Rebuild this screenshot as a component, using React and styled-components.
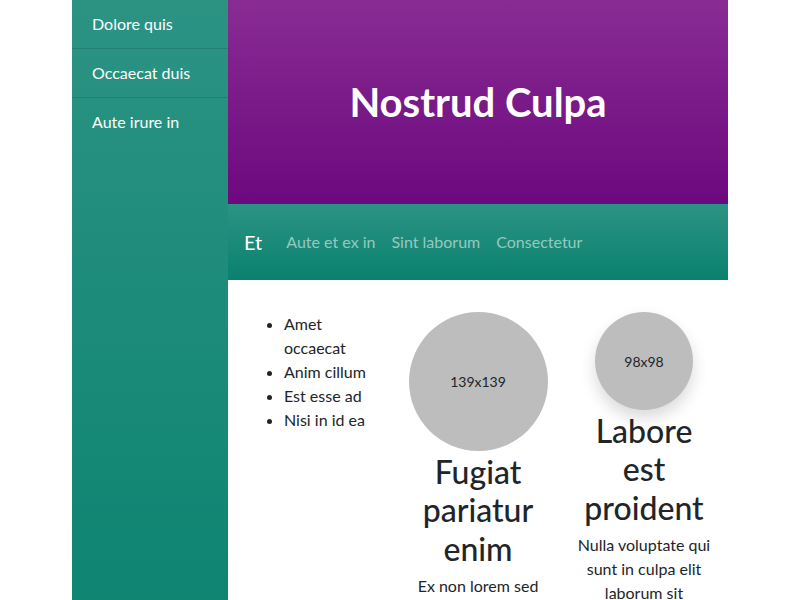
import React from "react";
import styled, { createGlobalStyle } from "styled-components";

const GlobalStyle = createGlobalStyle`
  html, body {
    margin: 0;
    padding: 0;
    background: #fff;
  }
  body {
    font-family: Lato, "Noto Sans", sans-serif;
    font-size: 16px;
    line-height: 1.5;
    color: #212529;
  }
`;

const Shell = styled.div`
  width: 656px;
  margin: 0 auto;
  min-height: 600px;
  display: grid;
  grid-template-columns: 156px 500px;
`;

const Sidebar = styled.aside`
  background: linear-gradient(180deg, #2c9383 0%, #0e8471 100%);
  min-height: 600px;
`;

const SideLink = styled.a`
  display: block;
  padding: 12px 20px;
  color: #fff;
  text-decoration: none;
  border-bottom: 1px solid ${(p) => (p.last ? "transparent" : "rgba(0,0,0,0.12)")};
`;

const Main = styled.main`
  display: flex;
  flex-direction: column;
`;

const Hero = styled.header`
  height: 204px;
  display: flex;
  align-items: center;
  justify-content: center;
  background: linear-gradient(180deg, #882c93 0%, #6d087e 100%);

  h1 {
    margin: 0;
    color: #fff;
    font-size: 40px;
    font-weight: 700;
    line-height: 1.2;
  }
`;

const Navbar = styled.nav`
  height: 76px;
  display: flex;
  align-items: center;
  padding: 0 16px;
  background: linear-gradient(180deg, #2c9383 0%, #0a816f 100%);
`;

const Brand = styled.span`
  color: #fff;
  font-size: 20px;
  margin-right: 16px;
`;

const NavItem = styled.a`
  color: rgba(255, 255, 255, 0.55);
  padding: 0 8px;
  text-decoration: none;
`;

const Content = styled.section`
  display: grid;
  grid-template-columns: 156px 156px 1fr;
  padding: 32px 16px 0;
  align-items: start;
`;

const List = styled.ul`
  margin: 0;
  padding: 0 16px 0 40px;
`;

const Card = styled.div`
  display: flex;
  flex-direction: column;
  align-items: center;
  text-align: center;
  padding-left: ${(p) => p.inset || 0}px;

  h2 {
    margin: 2px 0 6px;
    font-size: 32px;
    font-weight: 500;
    line-height: 1.2;
  }
  p {
    margin: 0;
  }
`;

const Avatar = styled.div`
  width: ${(p) => p.size}px;
  height: ${(p) => p.size}px;
  flex: none;
  border-radius: 50%;
  background: #bdbdbd;
  display: flex;
  align-items: center;
  justify-content: center;
  font-size: 14px;
  box-shadow: ${(p) => (p.raised ? "0 8px 16px rgba(0,0,0,0.15)" : "none")};
`;

export default function App() {
  return (
    <>
      <GlobalStyle />
      <Shell>
        <Sidebar>
          <SideLink href="#">Dolore quis</SideLink>
          <SideLink href="#">Occaecat duis</SideLink>
          <SideLink href="#" last>Aute irure in</SideLink>
        </Sidebar>
        <Main>
          <Hero>
            <h1>Nostrud Culpa</h1>
          </Hero>
          <Navbar>
            <Brand>Et</Brand>
            <NavItem href="#">Aute et ex in</NavItem>
            <NavItem href="#">Sint laborum</NavItem>
            <NavItem href="#">Consectetur</NavItem>
          </Navbar>
          <Content>
            <List>
              <li>Amet occaecat</li>
              <li>Anim cillum</li>
              <li>Est esse ad</li>
              <li>Nisi in id ea</li>
            </List>
            <Card>
              <Avatar size={139}>139x139</Avatar>
              <h2>Fugiat pariatur enim</h2>
              <p>Ex non lorem sed</p>
            </Card>
            <Card inset={20}>
              <Avatar size={98} raised>98x98</Avatar>
              <h2>Labore est proident</h2>
              <p>Nulla voluptate qui sunt in culpa elit laborum sit</p>
            </Card>
          </Content>
        </Main>
      </Shell>
    </>
  );
}
